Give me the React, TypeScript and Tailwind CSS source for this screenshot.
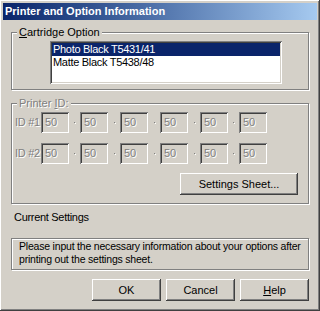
import React from "react";

// classic win2k bevels
const raised =
  "shadow-[inset_-1px_-1px_#404040,inset_1px_1px_#ffffff,inset_-2px_-2px_#808080,inset_2px_2px_#d4d0c8]";
const sunken =
  "shadow-[inset_1px_1px_#808080,inset_-1px_-1px_#ffffff,inset_2px_2px_#404040,inset_-2px_-2px_#d4d0c8]";
const etched = "border border-[#808080] shadow-[inset_1px_1px_#ffffff,1px_1px_#ffffff]";
const disabledText = "text-[#808080] [text-shadow:1px_1px_0_#ffffff]";

function GroupLabel({ children, disabled }: { children: React.ReactNode; disabled?: boolean }) {
  return (
    <span
      className={`absolute left-[5px] top-[-7px] bg-[#d4d0c8] px-[2px] leading-[13px] ${
        disabled ? disabledText : "text-black"
      }`}
    >
      {children}
    </span>
  );
}

function Button({ children, className = "" }: { children: React.ReactNode; className?: string }) {
  return (
    <div
      className={`flex h-[22px] items-center justify-center bg-[#d4d0c8] text-black ${raised} ${className}`}
    >
      {children}
    </div>
  );
}

function IdRow({ label }: { label: string }) {
  const seps = [11, 12, 12, 12, 11];
  return (
    <div className="flex items-center">
      <span className={`w-[29px] shrink-0 whitespace-nowrap pl-[3px] tracking-[-0.3px] ${disabledText}`}>
        {label}
      </span>
      {[0, 1, 2, 3, 4, 5].map((i) => (
        <React.Fragment key={i}>
          <div
            className={`flex h-[21px] w-[28px] shrink-0 items-center pl-[4px] ${sunken} ${disabledText}`}
          >
            50
          </div>
          {i < 5 && (
            <div className="flex shrink-0 justify-center" style={{ width: seps[i] }}>
              <span className="h-[1px] w-[1px] bg-[#808080] shadow-[1px_1px_#ffffff]" />
            </div>
          )}
        </React.Fragment>
      ))}
    </div>
  );
}

export default function App() {
  return (
    <div
      className={`flex h-[311px] w-[320px] flex-col bg-[#d4d0c8] p-[3px] text-[11px] leading-[13px] font-['Liberation_Sans',Arial,sans-serif] ${raised}`}
    >
      {/* title bar */}
      <div className="flex h-[17px] items-center bg-gradient-to-r from-[#0a246a] to-[#a6caf0] pl-[2px] font-bold text-white">
        Printer and Option Information
      </div>

      <div className="flex flex-1 flex-col px-[8px]">
        {/* Cartridge Option */}
        <div className={`relative mt-[12px] h-[58px] ${etched}`}>
          <GroupLabel>
            <u>C</u>artridge Option
          </GroupLabel>
          <div className={`ml-[38px] mt-[8px] h-[43px] w-[232px] bg-white p-[2px] ${sunken}`}>
            <div className="h-[13px] bg-[#0a246a] pl-[1px] tracking-[-0.3px] text-white">
              Photo Black T5431/41
            </div>
            <div className="h-[13px] pl-[1px] tracking-[-0.3px] text-black">Matte Black T5438/48</div>
          </div>
        </div>

        {/* Printer ID */}
        <div className={`relative mt-[13px] flex h-[101px] flex-col ${etched}`}>
          <GroupLabel disabled>
            Printer <u>I</u>D:
          </GroupLabel>
          <div className="mt-[8px] flex flex-col gap-[10px]">
            <IdRow label="ID #1" />
            <IdRow label="ID #2" />
          </div>
          <div className="mt-[9px] flex justify-end pr-[10px]">
            <Button className="h-[21px] w-[118px]">
              Settin<u>g</u>s Sheet...
            </Button>
          </div>
        </div>

        {/* Current Settings */}
        <div className="mt-[7px] pl-[3px] tracking-[-0.3px] text-black">Current Settings</div>
        <div
          className={`mt-[14px] h-[32px] whitespace-nowrap pl-[7px] pt-[1px] text-[10.5px] tracking-[-0.2px] text-black ${etched}`}
        >
          Please input the necessary information about your options after
          <br />
          printing out the settings sheet.
        </div>

        {/* buttons */}
        <div className="mt-[9px] flex justify-end gap-[5px]">
          <Button className="w-[69px]">OK</Button>
          <Button className="w-[69px]">Cancel</Button>
          <Button className="w-[69px]">
            <u>H</u>elp
          </Button>
        </div>
      </div>
    </div>
  );
}
